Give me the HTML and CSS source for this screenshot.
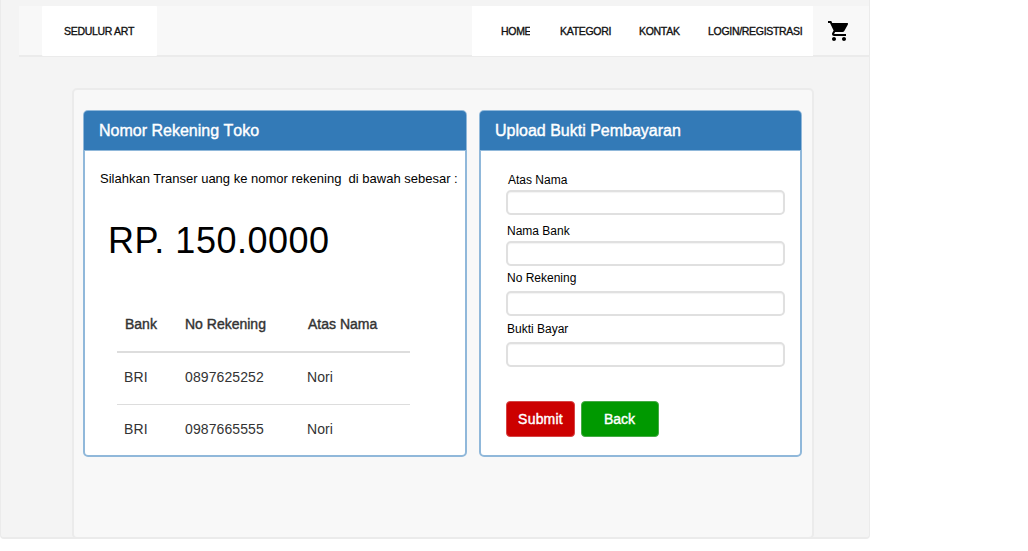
FILE: index.html
```html
<!DOCTYPE html>
<html lang="id">
<head>
<meta charset="utf-8">
<title>Sedulur Art</title>
<link rel="stylesheet" href="styles.css">
</head>
<body>
<div class="page">
  <header class="navbar">
    <a class="brand">SEDULUR ART</a>
    <nav class="menu">
      <a class="menu-home">HOME</a>
      <a class="menu-category">KATEGORI</a>
      <a class="menu-contact">KONTAK</a>
      <a class="menu-login">LOGIN/REGISTRASI</a>
    </nav>
    <svg class="cart" viewBox="0 0 24 24"><path d="M7 18c-1.1 0-1.99.9-1.99 2S5.900 22 7 22s2-.9 2-2-.9-2-2-2zM1 2v2h2l3.600 7.590-1.350 2.450c-.16.280-.25.610-.25.960 0 1.100.9 2 2 2h12v-2H7.420c-.14 0-.25-.11-.25-.25l.03-.12.900-1.630h7.450c.75 0 1.410-.41 1.750-1.030l3.580-6.490A1.003 1.003 0 0 0 20 4H5.210l-.94-2H1zm16 16c-1.100 0-1.990.9-1.990 2s.89 2 1.990 2 2-.9 2-2-.9-2-2-2z"/></svg>
  </header>
  <main class="content">
    <section class="panel account">
      <h2 class="panel-title">Nomor Rekening Toko</h2>
      <p class="instruction">Silahkan Transer uang ke nomor rekening&nbsp; di bawah sebesar :</p>
      <p class="amount">RP. 150.0000</p>
      <div class="accounts">
        <div class="row head"><span>Bank</span><span>No Rekening</span><span>Atas Nama</span></div>
        <div class="row first"><span>BRI</span><span>0897625252</span><span>Nori</span></div>
        <div class="row"><span>BRI</span><span>0987665555</span><span>Nori</span></div>
      </div>
    </section>
    <section class="panel upload">
      <h2 class="panel-title">Upload Bukti Pembayaran</h2>
      <form class="form">
        <label class="field owner"><span>Atas Nama</span><input type="text"></label>
        <label class="field bank"><span>Nama Bank</span><input type="text"></label>
        <label class="field number"><span>No Rekening</span><input type="text"></label>
        <label class="field proof"><span>Bukti Bayar</span><input type="text"></label>
        <div class="actions">
          <button class="btn submit" type="button">Submit</button>
          <button class="btn back" type="button">Back</button>
        </div>
      </form>
    </section>
  </main>
</div>
</body>
</html>
```
FILE: styles.css
```css
* { box-sizing: border-box; }
body { margin: 0; background: #fff; font-family: "Liberation Sans", Arial, sans-serif; color: #000; }
h2, p { margin: 0; }
.page {
  width: 870px;
  height: 539px;
  padding-top: 6px;
  background: #f4f4f4;
  border: solid #ebebeb;
  border-width: 0 1px 2px;
  border-radius: 0 0 4px 4px;
}
.navbar {
  display: flex;
  height: 51px;
  margin-left: 18px;
  background: #f8f8f8;
  border-bottom: 2px solid #ebebeb;
  font-size: 10.5px;
  letter-spacing: -0.3px;
  line-height: 50px;
  color: #111;
  -webkit-text-stroke: 0.35px #111;
}
.brand { width: 115px; height: 50px; margin-left: 23px; padding-left: 22px; background: #fff; border-radius: 1px; }
.menu { display: flex; width: 341px; height: 50px; margin-left: 315px; padding-left: 29px; background: #fff; }
.menu-home { width: 29px; margin-right: 30px; overflow: hidden; }
.menu-category { width: 79px; }
.menu-contact { width: 69px; }
.cart { flex: none; width: 24px; height: 24px; margin: 13px 0 0 14px; }
.content {
  display: flex;
  align-items: flex-start;
  gap: 12px;
  width: 742px;
  height: 451px;
  margin: 31px 0 0 71px;
  padding: 20px 0 0 9px;
  background: #f8f8f8;
  border: 2px solid #ebebeb;
  border-radius: 5px;
}
.panel { height: 347px; background: #fff; border: 2px solid #90b8da; border-radius: 5px; }
.account { width: 384px; }
.upload { width: 323px; }
.panel-title {
  height: 40px;
  margin: -1px -1px 0;
  padding-left: 15px;
  background: #337ab7;
  border-bottom: 1px solid #90b8da;
  border-radius: 4px 4px 0 0;
  color: #fff;
  font-size: 16px;
  font-weight: 400;
  font-kerning: none;
  line-height: 40px;
  -webkit-text-stroke: 0.4px #fff;
}
.instruction { margin: 20px 0 0 15px; font-size: 13px; line-height: 16px; white-space: nowrap; }
.amount { margin: 33px 0 0 23px; font-size: 36px; letter-spacing: 0.5px; line-height: 42px; }
.accounts { width: 293px; margin: 37px 0 0 32px; color: #333; font-size: 14px; }
.row { display: grid; grid-template-columns: 61px 122px 1fr; height: 52px; padding-left: 7px; line-height: 49px; letter-spacing: 0.1px; }
.head { grid-template-columns: 60px 123px 1fr; height: 54px; padding-left: 8px; border-bottom: 2px solid #ddd; line-height: 50px; letter-spacing: 0; -webkit-text-stroke: 0.4px #333; }
.first { border-bottom: 1px solid #ddd; }
.form { padding-left: 25px; font-size: 12px; }
.field { display: flex; flex-direction: column; }
.field span { height: 14px; padding-left: 1px; line-height: 14px; }
.field input {
  width: 279px;
  height: 25px;
  padding: 0 8px;
  background: #fff;
  border: 2px solid #e0e0e0;
  border-radius: 5px;
  box-shadow: inset 0 1px 1px #f3f3f3;
}
.owner { gap: 3px; padding-top: 22px; }
.owner span { padding-left: 2px; }
.bank { gap: 3px; padding-top: 9px; }
.number { gap: 6px; padding-top: 5px; }
.proof { gap: 6px; padding-top: 6px; }
.actions { display: flex; gap: 6px; margin-top: 34px; }
.btn {
  height: 36px;
  padding: 0;
  border: 1px solid;
  border-radius: 4px;
  color: #fff;
  font: 14px/34px "Liberation Sans", Arial, sans-serif;
  -webkit-text-stroke: 0.4px #fff;
}
.submit { width: 69px; background: #c00; border-color: #d64545; letter-spacing: 0.2px; }
.back { width: 78px; padding-right: 1px; background: #090; border-color: #45ab45; }
```
